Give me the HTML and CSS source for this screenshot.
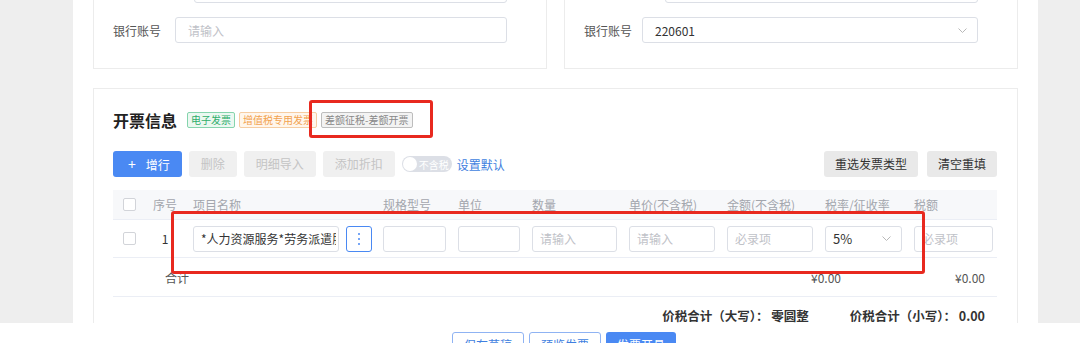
FILE: index.html
```html
<!DOCTYPE html>
<html lang="zh-CN">
<head>
  <meta charset="UTF-8" />
  <title>开票信息</title>
  <link rel="stylesheet" href="styles.css">
</head>
<body>
  <div class="screen">

    <div class="workspace">
      <div class="main">

        <div class="top-cards">
          <div class="card form-card">
            <div class="form-row">
              <label class="form-label wide">开户行地址</label>
              <input class="text-input" type="text" value="">
            </div>
            <div class="form-row">
              <label class="form-label">银行账号</label>
              <input class="text-input" type="text" placeholder="请输入">
            </div>
          </div>
          <div class="card form-card">
            <div class="form-row">
              <label class="form-label wide">开户行地址</label>
              <input class="text-input" type="text" value="">
            </div>
            <div class="form-row">
              <label class="form-label narrow">银行账号</label>
              <div class="select-box">
                <span>220601</span>
                <svg width="9" height="5" viewBox="0 0 9 5"><polyline points="0.5,0.5 4.5,4.5 8.5,0.5" fill="none" stroke="#b8b8b8" /></svg>
              </div>
            </div>
          </div>
        </div>

        <div class="card invoice-card">
          <div class="invoice-title">
            <h2>开票信息</h2>
            <span class="tag tag-green">电子发票</span>
            <span class="tag tag-orange">增值税专用发票</span>
            <span class="tag tag-gray">差额征税-差额开票</span>
          </div>

          <div class="toolbar">
            <div class="toolbar-left">
              <button class="btn btn-primary"><span class="plus">+</span>增行</button>
              <button class="btn btn-disabled">删除</button>
              <button class="btn btn-disabled">明细导入</button>
              <button class="btn btn-disabled">添加折扣</button>
              <span class="switch"><span class="switch-knob"></span><span class="switch-text">不含税</span></span>
              <a class="link">设置默认</a>
            </div>
            <div class="toolbar-right">
              <button class="btn btn-light">重选发票类型</button>
              <button class="btn btn-light">清空重填</button>
            </div>
          </div>

          <div class="goods-table">
            <div class="tr th">
              <div class="td td-check"><span class="checkbox"></span></div>
              <div class="td td-center">序号</div>
              <div class="td">项目名称</div>
              <div class="td">规格型号</div>
              <div class="td">单位</div>
              <div class="td">数量</div>
              <div class="td">单价(不含税)</div>
              <div class="td">金额(不含税)</div>
              <div class="td">税率/征收率</div>
              <div class="td">税额</div>
            </div>
            <div class="tr">
              <div class="td td-check"><span class="checkbox"></span></div>
              <div class="td td-center">1</div>
              <div class="td td-name">
                <input class="cell-input" type="text" value="*人力资源服务*劳务派遣服务">
                <span class="more-btn">
                  <svg width="4" height="14" viewBox="0 0 4 14"><circle cx="2" cy="2" r="1" fill="#4a89f3" /><circle cx="2" cy="7" r="1" fill="#4a89f3" /><circle cx="2" cy="12" r="1" fill="#4a89f3" /></svg>
                </span>
              </div>
              <div class="td"><input class="cell-input" type="text"></div>
              <div class="td"><input class="cell-input" type="text"></div>
              <div class="td"><input class="cell-input" type="text" placeholder="请输入"></div>
              <div class="td"><input class="cell-input" type="text" placeholder="请输入"></div>
              <div class="td"><input class="cell-input" type="text" placeholder="必录项"></div>
              <div class="td">
                <div class="select-box cell-select">
                  <span>5%</span>
                  <svg width="9" height="5" viewBox="0 0 9 5"><polyline points="0.5,0.5 4.5,4.5 8.5,0.5" fill="none" stroke="#b8b8b8" /></svg>
                </div>
              </div>
              <div class="td"><input class="cell-input" type="text" placeholder="必录项"></div>
            </div>
            <div class="tr total">
              <div class="total-label">合计</div>
              <div class="total-amount">¥0.00</div>
              <div class="total-amount">¥0.00</div>
            </div>
          </div>

          <div class="summary">
            <span>价税合计（大写）： 零圆整</span>
            <span>价税合计（小写）： 0.00</span>
          </div>
        </div>

      </div>
    </div>

    <div class="footer">
      <button class="btn btn-outline">保存草稿</button>
      <button class="btn btn-outline">预览发票</button>
      <button class="btn btn-primary">发票开具</button>
    </div>

    <div class="mark mark-tag"></div>
    <div class="mark mark-row"></div>
  </div>
</body>
</html>
```

FILE: styles.css
```css
* {
  box-sizing: border-box;
}

body {
  margin: 0;
  background: #fff;
  font-family: "Noto Sans CJK SC", "Liberation Sans", sans-serif;
  font-size: 12px;
  color: #333;
}

.screen {
  position: relative;
  width: 1080px;
  height: 343px;
  overflow: hidden;
  display: flex;
  flex-direction: column;
}

.workspace {
  flex: none;
  height: 323px;
  overflow: hidden;
  background: #eeeeee;
  padding-left: 73px;
}

.main {
  width: 965px;
  min-height: 100%;
  background: #fff;
  padding: 0 20px;
}

/* top form cards (page is scrolled, first row cut off) */
.top-cards {
  display: grid;
  grid-template-columns: 1fr 1fr;
  gap: 17px;
  margin-top: -44px;
}

.card {
  background: #fff;
  border: 1px solid #ececec;
}

.form-card {
  display: flex;
  flex-direction: column;
  gap: 14px;
  padding: 20px 39px 25px 19px;
}

.form-row {
  display: flex;
  align-items: center;
  height: 26px;
}

.form-label {
  flex: none;
  width: 62px;
  color: #555;
  font-size: 12px;
}

.form-label.narrow {
  width: 58px;
}

.form-label.wide {
  width: 81px;
}

.text-input {
  flex: 1;
  min-width: 0;
  height: 26px;
  border: 1px solid #dcdfe6;
  border-radius: 3px;
  padding: 0 12px;
  font: inherit;
  color: #333;
  outline: none;
}

.text-input::placeholder,
.cell-input::placeholder {
  color: #bfc2c8;
}

.select-box {
  flex: 1;
  height: 26px;
  display: flex;
  align-items: center;
  justify-content: space-between;
  border: 1px solid #dcdfe6;
  border-radius: 3px;
  padding: 0 10px 0 12px;
  color: #333;
}

/* invoice card */
.invoice-card {
  margin-top: 19px;
  padding: 19px 20px 0 19px;
}

.invoice-title {
  display: flex;
  align-items: center;
  gap: 4px;
  height: 24px;
}

.invoice-title h2 {
  margin: 0 6px 0 0;
  font-size: 16px;
  font-weight: bold;
  color: #222;
}

.tag {
  height: 16px;
  line-height: 14px;
  padding: 0 3px;
  font-size: 10px;
  border: 1px solid;
  border-radius: 2px;
}

.tag-green {
  color: #2fae6b;
  background: #ebf8f1;
  border-color: #85d4ad;
}

.tag-orange {
  color: #f2a24f;
  background: #fff6ec;
  border-color: #f6cda2;
}

.tag-gray {
  color: #888;
  background: #f3f3f3;
  border-color: #bdbdbd;
}

.toolbar {
  display: flex;
  justify-content: space-between;
  align-items: center;
  margin-top: 19px;
}

.toolbar-left,
.toolbar-right {
  display: flex;
  align-items: center;
  gap: 7px;
}

.toolbar-right {
  gap: 9px;
}

.btn {
  height: 26px;
  padding: 0 12px;
  border: none;
  border-radius: 3px;
  font: inherit;
  font-size: 12px;
  line-height: 26px;
  cursor: pointer;
}

.btn-primary {
  background: #4a89f3;
  color: #fff;
  padding: 0 12px 0 15px;
}

.btn-primary .plus {
  margin-right: 10px;
  font-size: 14px;
}

.btn-disabled {
  background: #f0f0f0;
  color: #c4c4c4;
}

.btn-light {
  background: #e9e9e9;
  color: #333;
  padding: 0 11px;
}

.switch {
  display: flex;
  align-items: center;
  width: 50px;
  height: 16px;
  border-radius: 8px;
  background: #dcdfe6;
  padding: 0 1px;
}

.switch-knob {
  width: 14px;
  height: 14px;
  border-radius: 50%;
  background: #fff;
}

.switch-text {
  margin-left: 2px;
  font-size: 10px;
  color: #fff;
}

.link {
  margin-left: -2px;
  color: #3f7fe0;
}

/* goods table */
.goods-table {
  margin-top: 13px;
}

.tr {
  display: grid;
  grid-template-columns: 32px 40px 190px 75px 74px 97px 98px 98px 89px 91px;
  align-items: center;
  height: 38px;
  border-bottom: 1px solid #ebeef5;
}

.tr.th {
  height: 30px;
  background: #f7f8fa;
  color: #a3a6ad;
}

.td {
  padding: 0 4px 0 8px;
  white-space: nowrap;
}

.td-check {
  padding: 0 0 0 10px;
  display: flex;
}

.td-center {
  padding: 0;
  text-align: center;
}

.td-name {
  display: flex;
  align-items: center;
  gap: 7px;
  padding-right: 3px;
}

.checkbox {
  width: 13px;
  height: 13px;
  border: 1px solid #d2d4d9;
  border-radius: 2px;
  background: #fff;
}

.cell-input {
  width: 100%;
  min-width: 0;
  height: 26px;
  border: 1px solid #dcdfe6;
  border-radius: 3px;
  padding: 0 7px;
  font: inherit;
  color: #333;
  outline: none;
}

.td-name .cell-input {
  flex: 1;
  padding-right: 2px;
}

.more-btn {
  flex: none;
  width: 26px;
  height: 26px;
  display: flex;
  align-items: center;
  justify-content: center;
  border: 1px solid #4a89f3;
  border-radius: 3px;
}

.cell-select {
  padding: 0 10px 0 7px;
  font-size: 13px;
}

.tr.total {
  grid-template-columns: 1fr 100px 144px;
  height: 39px;
}

.total-label {
  padding-left: 52px;
  color: #555;
}

.total-amount {
  text-align: right;
  padding-right: 12px;
  color: #555;
}

.summary {
  display: flex;
  justify-content: flex-end;
  align-items: center;
  gap: 41px;
  height: 36px;
  padding-right: 12px;
  font-size: 12.5px;
  font-weight: bold;
  color: #333;
}

/* fixed footer */
.footer {
  flex: 1;
  display: flex;
  justify-content: center;
  gap: 5px;
  padding: 9px 0 0 48px;
  background: #fff;
}

.btn-outline {
  height: 26px;
  padding: 0 11px;
  background: #fff;
  border: 1px solid #8fb3f3;
  color: #3f7fe0;
  line-height: 24px;
}

.footer .btn-primary {
  padding: 0 11px;
}

/* red annotation boxes */
.mark {
  position: absolute;
  border: 3px solid #e8291f;
  border-radius: 3px;
}

.mark-tag {
  left: 309px;
  top: 100px;
  width: 124px;
  height: 38px;
}

.mark-row {
  left: 171px;
  top: 211px;
  width: 754px;
  height: 63px;
}
```
